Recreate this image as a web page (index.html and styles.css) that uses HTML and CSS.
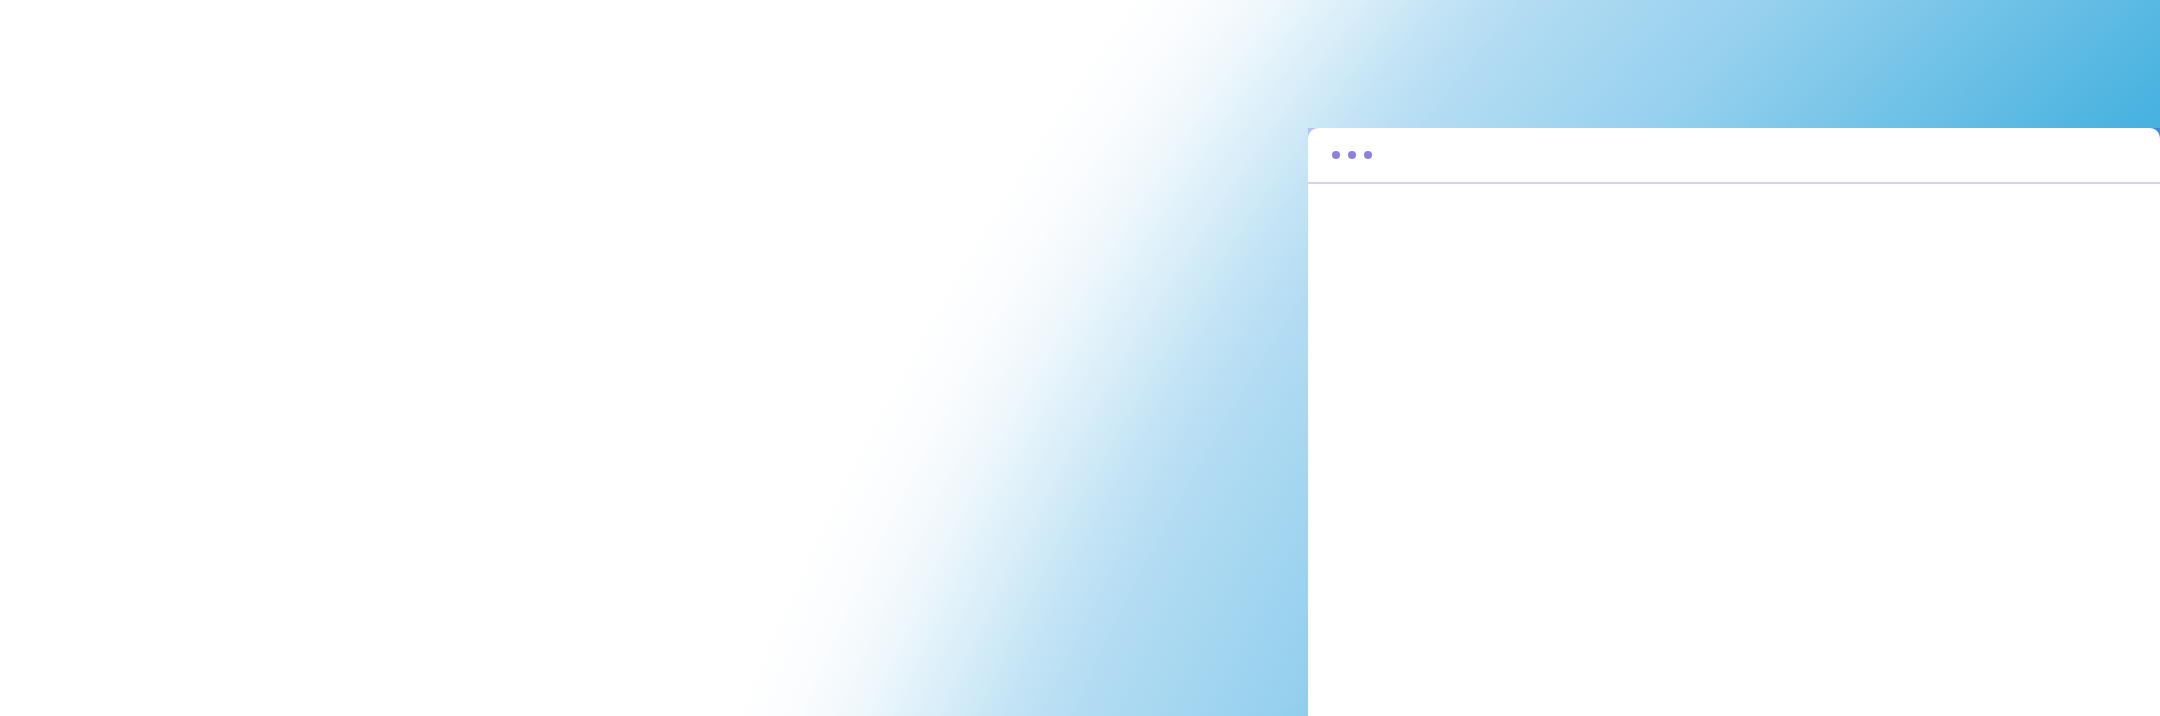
FILE: index.html
```html
<!DOCTYPE html>
<html lang="en">
<head>
<meta charset="utf-8">
<title>Window mockup</title>
<link rel="stylesheet" href="styles.css">
</head>
<body>
<main class="hero">
  <section class="window-frame">
    <div class="window">
      <header class="window-bar">
        <span class="dot"></span>
        <span class="dot"></span>
        <span class="dot"></span>
      </header>
      <div class="window-body"></div>
    </div>
  </section>
</main>
</body>
</html>
```

FILE: styles.css
```css
html, body {
  margin: 0;
  padding: 0;
  background: #ffffff;
  font-family: "Inter", "Liberation Sans", sans-serif;
}

.hero {
  width: 2160px;
  height: 716px;
  overflow: hidden;
  display: flex;
  justify-content: flex-end;
  align-items: flex-start;
  padding-top: 128px;
  box-sizing: border-box;
  background: radial-gradient(circle 3480px at 3937px 2018px,
    #3aa9dc 2450px,
    #4ab3e0 2621px,
    #95d0ee 2957px,
    #b3dcf3 3144px,
    #c4e4f5 3210px,
    #dbeff9 3280px,
    #eef7fc 3340px,
    #fafcfe 3400px,
    #ffffff 3460px);
}

.window-frame {
  width: 852px;
  height: 588px;
  background: linear-gradient(90deg, #b4bff2 0%, #7fb0e6 50%, #3a8cd8 100%);
}

.window {
  height: 100%;
  background: #ffffff;
  border-radius: 10px 10px 0 0;
  display: flex;
  flex-direction: column;
}

.window-bar {
  height: 54px;
  border-bottom: 2px solid #d6cff4;
  display: flex;
  align-items: center;
  gap: 8px;
  padding-left: 24px;
  flex-shrink: 0;
}

.dot {
  width: 8px;
  height: 8px;
  border-radius: 50%;
  background: #8d7fe0;
}

.window-body {
  flex: 1;
}
```
